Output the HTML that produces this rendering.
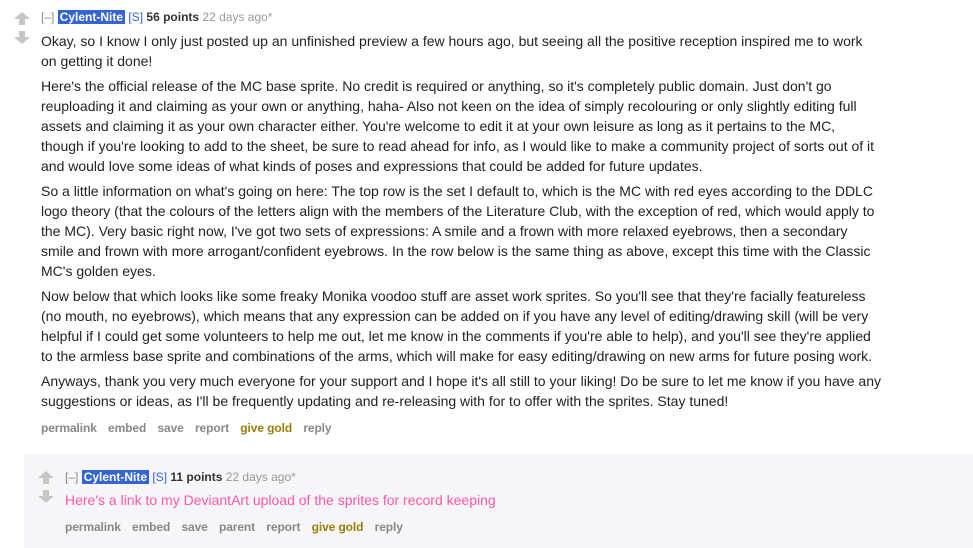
<!DOCTYPE html>
<html><head><meta charset="utf-8"><style>
body{margin:0;background:#fff;font-family:"Liberation Sans",Arial,sans-serif;width:973px;height:548px;overflow:hidden;position:relative}
.c{position:absolute}
.tag{font-size:12px;color:#888;white-space:nowrap;line-height:14px}
.tag .u{background:#3465d3;color:#fff;font-weight:bold;padding:0 2px}
.tag .s{color:#3465d3}
.tag b{color:#333}
.tag .t{color:#999}
.md{font-size:14px;color:#222;line-height:20px;white-space:nowrap}
.md p{margin:0 0 5px 0}
.btn{font-size:12px;font-weight:bold;color:#888;white-space:nowrap;letter-spacing:-0.1px}
.btn span{margin-right:8px}
.gold{color:#9a7d0a}
.arr{position:absolute;width:0;height:0;border-left:8px solid transparent;border-right:8px solid transparent}
</style></head><body>
<div class="arr" style="left:14px;top:12px;border-bottom:7px solid #c6c6c6"></div><div style="position:absolute;left:19px;top:19px;width:6px;height:6px;background:#c6c6c6"></div>
<div style="position:absolute;left:19px;top:31px;width:6px;height:6px;background:#c6c6c6"></div><div class="arr" style="left:14px;top:37px;border-top:7px solid #c6c6c6"></div>

<div class="c tag" style="left:41px;top:10px">[–] <span class="u">Cylent-Nite</span> <span class="s">[S]</span> <b>56 points</b> <span class="t">22 days ago*</span></div>
<div class="c md" style="left:41px;top:31px;width:874px">
<p>Okay, so I know I only just posted up an unfinished preview a few hours ago, but seeing all the positive reception inspired me to work<br>on getting it done!</p>
<p>Here's the official release of the MC base sprite. No credit is required or anything, so it's completely public domain. Just don't go<br>reuploading it and claiming as your own or anything, haha- Also not keen on the idea of simply recolouring or only slightly editing full<br>assets and claiming it as your own character either. You're welcome to edit it at your own leisure as long as it pertains to the MC,<br>though if you're looking to add to the sheet, be sure to read ahead for info, as I would like to make a community project of sorts out of it<br>and would love some ideas of what kinds of poses and expressions that could be added for future updates.</p>
<p>So a little information on what's going on here: The top row is the set I default to, which is the MC with red eyes according to the DDLC<br>logo theory (that the colours of the letters align with the members of the Literature Club, with the exception of red, which would apply to<br>the MC). Very basic right now, I've got two sets of expressions: A smile and a frown with more relaxed eyebrows, then a secondary<br>smile and frown with more arrogant/confident eyebrows. In the row below is the same thing as above, except this time with the Classic<br>MC's golden eyes.</p>
<p>Now below that which looks like some freaky Monika voodoo stuff are asset work sprites. So you'll see that they're facially featureless<br>(no mouth, no eyebrows), which means that any expression can be added on if you have any level of editing/drawing skill (will be very<br>helpful if I could get some volunteers to help me out, let me know in the comments if you're able to help), and you'll see they're applied<br>to the armless base sprite and combinations of the arms, which will make for easy editing/drawing on new arms for future posing work.</p>
<p>Anyways, thank you very much everyone for your support and I hope it's all still to your liking! Do be sure to let me know if you have any<br>suggestions or ideas, as I'll be frequently updating and re-releasing with for to offer with the sprites. Stay tuned!</p>
</div>
<div class="c btn" style="left:41px;top:421px"><span>permalink</span> <span>embed</span> <span>save</span> <span>report</span> <span class="gold">give gold</span> <span>reply</span></div>

<div class="c" style="left:24px;top:454px;width:949px;height:94px;background:#f6f6f8"></div>
<div class="arr" style="left:38px;top:471px;border-bottom:7px solid #c6c6c6"></div><div style="position:absolute;left:43px;top:478px;width:6px;height:6px;background:#c6c6c6"></div>
<div style="position:absolute;left:43px;top:490px;width:6px;height:6px;background:#c6c6c6"></div><div class="arr" style="left:38px;top:496px;border-top:7px solid #c6c6c6"></div>
<div class="c tag" style="left:65px;top:470px">[–] <span class="u">Cylent-Nite</span> <span class="s">[S]</span> <b>11 points</b> <span class="t">22 days ago*</span></div>
<div class="c md" style="left:65px;top:490px;color:#ff55aa">Here's a link to my DeviantArt upload of the sprites for record keeping</div>
<div class="c btn" style="left:65px;top:520px"><span>permalink</span> <span>embed</span> <span>save</span> <span>parent</span> <span>report</span> <span class="gold">give gold</span> <span>reply</span></div>
</body></html>
